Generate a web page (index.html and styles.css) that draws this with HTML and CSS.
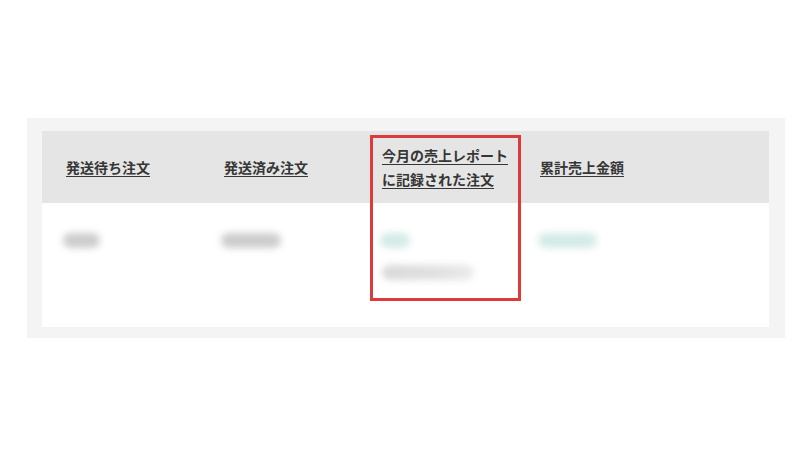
FILE: index.html
```html
<!DOCTYPE html>
<html lang="ja">
<head>
<meta charset="utf-8">
<link rel="stylesheet" href="styles.css">
</head>
<body>
<div class="page">
  <div class="panel">
    <div class="table">
      <div class="row head">
        <div class="cell"><a class="link">発送待ち注文</a></div>
        <div class="cell"><a class="link">発送済み注文</a></div>
        <div class="cell"><a class="link">今月の売上レポート<br>に記録された注文</a></div>
        <div class="cell"><a class="link">累計売上金額</a></div>
      </div>
      <div class="row body">
        <div class="cell"><span class="blob grey w37"></span></div>
        <div class="cell"><span class="blob grey w60"></span></div>
        <div class="cell">
          <span class="blob teal w30"></span>
          <span class="blob light w92"></span>
        </div>
        <div class="cell"><span class="blob teal w59"></span></div>
      </div>
      <div class="highlight"></div>
    </div>
  </div>
</div>
</body>
</html>
```
FILE: styles.css
```css
html, body {
  margin: 0;
  background: #ffffff;
}
.page {
  padding: 118px 0 0 27px;
  font-family: "Noto Sans CJK JP", "Noto Sans", sans-serif;
}
.panel {
  width: 758px;
  box-sizing: border-box;
  background: #f4f4f4;
  padding: 13px 16px 11px 15px;
}
.table {
  position: relative;
}
.row {
  display: grid;
  grid-template-columns: 158px 158px 158px 1fr;
  padding-left: 24px;
}
.head {
  height: 72px;
  background: #e5e5e5;
  align-items: center;
}
.body {
  height: 124px;
  background: #ffffff;
  align-items: start;
}
.link {
  font-size: 14px;
  font-weight: bold;
  line-height: 24px;
  color: #363636;
  text-decoration: underline;
  text-underline-offset: 3px;
  text-decoration-thickness: 1px;
  display: block;
}
.body .cell {
  display: flex;
  flex-direction: column;
  gap: 17px;
  padding-top: 30px;
}
.blob {
  display: block;
  height: 15px;
  border-radius: 8px;
  filter: blur(3.5px);
  margin-left: -3px;
}
.grey { background: #cdcdcd; }
.light { background: linear-gradient(90deg, #d8d8d8, #e2e2e2 70%, #ececec); margin-left: 0; }
.teal { background: #d4ebe8; margin-left: -2px; }
.w37 { width: 37px; }
.w60 { width: 60px; }
.w30 { width: 30px; }
.w92 { width: 92px; }
.w59 { width: 59px; }
.highlight {
  position: absolute;
  left: 328px;
  top: 4px;
  width: 151px;
  height: 166px;
  box-sizing: border-box;
  border: 3px solid #dd3b3b;
}
```
